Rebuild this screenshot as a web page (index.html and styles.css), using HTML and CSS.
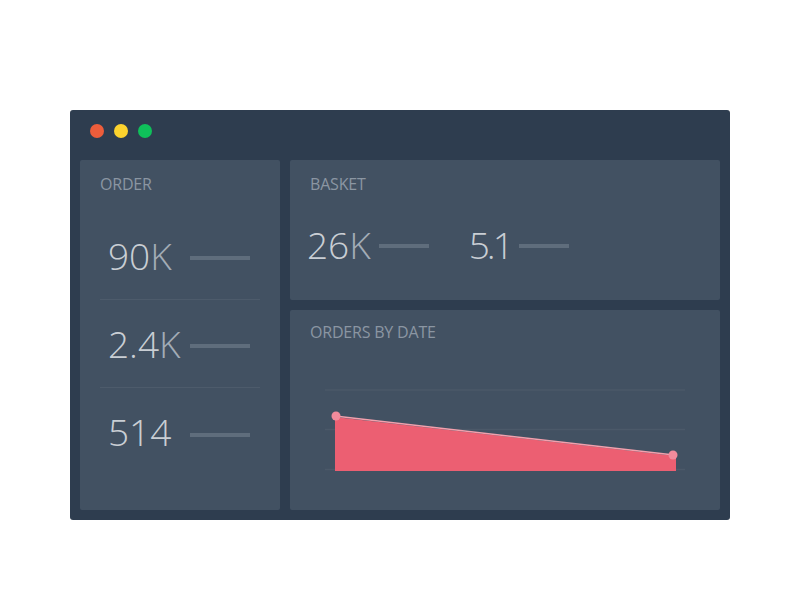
FILE: index.html
```html
<!DOCTYPE html>
<html>
<head>
<meta charset="utf-8">
<link rel="stylesheet" href="styles.css">
</head>
<body>
<div class="window">
  <div class="titlebar">
    <span class="dot dot-red"></span>
    <span class="dot dot-yellow"></span>
    <span class="dot dot-green"></span>
  </div>
  <div class="grid">
    <section class="card card-order">
      <h2 class="label">ORDER</h2>
      <div class="stat-row">
        <span class="num">90<span class="unit">K</span></span>
        <span class="bar"></span>
      </div>
      <div class="stat-row">
        <span class="num">2.4<span class="unit">K</span></span>
        <span class="bar"></span>
      </div>
      <div class="stat-row last">
        <span class="num">514</span>
        <span class="bar"></span>
      </div>
    </section>
    <section class="card card-basket">
      <h2 class="label">BASKET</h2>
      <div class="basket-row">
        <div class="basket-item">
          <span class="num">26<span class="unit">K</span></span>
          <span class="bar"></span>
        </div>
        <div class="basket-item">
          <span class="num num-tight">5.1</span>
          <span class="bar"></span>
        </div>
      </div>
    </section>
    <section class="card card-chart">
      <h2 class="label">ORDERS BY DATE</h2>
      <svg class="chart" width="430" height="130" viewBox="0 0 430 130">
        <line x1="35" y1="45" x2="395" y2="45" class="gridline"/>
        <line x1="35" y1="84.5" x2="395" y2="84.5" class="gridline"/>
        <line x1="35" y1="124.5" x2="395" y2="124.5" class="gridline"/>
        <polygon points="45,72 386,111 386,126 45,126" class="area"/>
        <line x1="45" y1="71" x2="384" y2="110" class="trend"/>
        <circle cx="46" cy="71" r="4.5" class="pt"/>
        <circle cx="383" cy="110" r="4.5" class="pt"/>
      </svg>
    </section>
  </div>
</div>
</body>
</html>
```

FILE: styles.css
```css
html, body {
  margin: 0;
  padding: 0;
  background: #ffffff;
}
body {
  padding-top: 110px;
  font-family: "Open Sans", "Liberation Sans", sans-serif;
}
.window {
  width: 660px;
  height: 410px;
  box-sizing: border-box;
  margin: 0 auto;
  background: #2e3d4f;
  border-radius: 3px;
  padding: 0 10px 10px;
}
.titlebar {
  height: 40px;
  margin-bottom: 10px;
  display: flex;
  align-items: center;
  gap: 10px;
  padding-left: 10px;
  padding-top: 1px;
  box-sizing: border-box;
}
.dot {
  width: 14px;
  height: 14px;
  border-radius: 50%;
  display: block;
}
.dot-red { background: #ed5d3b; }
.dot-yellow { background: #fcd32e; }
.dot-green { background: #0fc05a; }

.grid {
  display: grid;
  grid-template-columns: 200px 430px;
  grid-template-rows: 140px 200px;
  gap: 10px;
}
.card {
  background: #425162;
  border-radius: 2px;
  box-sizing: border-box;
}
.card-order {
  grid-row: 1 / span 2;
  padding: 14px 20px 0;
}
.label {
  margin: 0;
  font-size: 16px;
  line-height: 20px;
  font-weight: 400;
  color: #8b96a2;
  letter-spacing: -0.2px;
}
.stat-row {
  height: 88px;
  display: flex;
  align-items: center;
  border-bottom: 1px solid #4d5b6b;
  box-sizing: border-box;
}
.card-order .label + .stat-row {
  margin-top: 18px;
}
.stat-row.last {
  border-bottom: none;
}
.num {
  font-size: 37px;
  line-height: 40px;
  font-weight: 300;
  color: #c9ced4;
}
.unit {
  color: #a3acb6;
}
.num-tight {
  letter-spacing: -3px;
}
.stat-row .num {
  width: 82px;
  padding-left: 8px;
}
.bar {
  display: block;
  width: 60px;
  height: 4px;
  background: #5f6d7c;
}
.stat-row .bar {
  margin-top: 5px;
}
.card-basket {
  padding: 14px 20px 0 17px;
}
.card-basket .label {
  padding-left: 3px;
}
.basket-row {
  display: flex;
  gap: 40px;
  margin-top: 31px;
}
.basket-item {
  display: flex;
  align-items: center;
  gap: 8px;
}
.basket-item .bar {
  width: 50px;
  margin-top: 2px;
}
.card-chart {
  padding-top: 12px;
}
.card-chart .label {
  padding-left: 20px;
  margin-bottom: 3px;
}
.chart {
  display: block;
}
.gridline {
  stroke: #4b5969;
  stroke-width: 1.5;
}
.area {
  fill: #ec5f72;
}
.trend {
  stroke: #f3a0ad;
  stroke-width: 1.5;
}
.pt {
  fill: #f28b9c;
}
```
